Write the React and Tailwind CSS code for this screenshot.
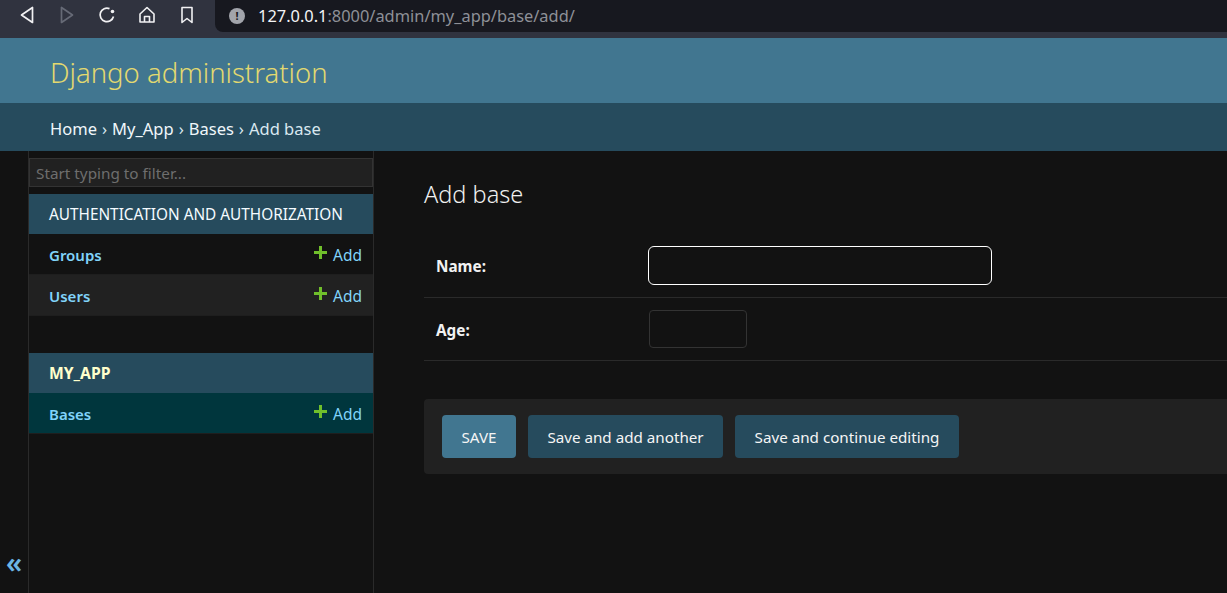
import React from 'react';

const font = { fontFamily: '"Noto Sans", "Open Sans", sans-serif' };

const NavRow = ({ name, className = 'bg-[#121212]' }) => (
  <div className={`flex h-[41px] items-center justify-between border-b border-[#1e1e1e] pl-5 pr-[11px] pt-[2px] text-[15px] ${className}`}>
    <span className="font-semibold text-[#81d4fa]">{name}</span>
    <span className="flex items-center text-[15.5px] text-[#81d4fa]">
      <svg width="13" height="13" viewBox="0 0 13 13" className="mr-[6px] mb-[6px]">
        <path d="M5 0h3v5h5v3H8v5H5V8H0V5h5z" fill="#70bf2b" />
      </svg>
      <span className="pt-[2px]">Add</span>
    </span>
  </div>
);

const Caption = ({ children, className = 'text-[15.35px] font-normal text-[#f5fbff]' }) => (
  <div className={`flex h-10 items-center bg-[#264b5d] pl-5 pt-[2px] ${className}`}>{children}</div>
);

const FormRow = ({ label, height, children }) => (
  <div className={`flex items-center border-b border-[#2a2a2a] pl-3 ${height}`}>
    <label className="w-[212px] pt-[2px] text-[15.3px] font-bold text-[#f2f2f2]">{label}</label>
    {children}
  </div>
);

const Button = ({ children, className }) => (
  <button className={`flex h-[43px] items-center justify-center rounded pt-px text-[15.2px] text-[#f5f5f5] ${className}`}>{children}</button>
);

export default function App() {
  return (
    <div style={font} className="flex h-[593px] w-[1227px] flex-col overflow-hidden bg-[#121212]">
      <div className="flex h-[38px] shrink-0 bg-[#30333f]">
        <div className="flex w-[215px] shrink-0 items-center gap-5 pb-[8px] pl-[17px] text-[#f1f1f3]">
          <svg width="20" height="20" viewBox="0 0 20 20" fill="none" stroke="currentColor" strokeWidth="1.7" strokeLinejoin="round">
            <path d="M15.5 2.5v15L4.5 10z" />
          </svg>
          <svg width="20" height="20" viewBox="0 0 20 20" fill="none" stroke="#666a76" strokeWidth="1.7" strokeLinejoin="round">
            <path d="M4.5 2.5v15l11-7.5z" />
          </svg>
          <svg width="20" height="20" viewBox="0 0 20 20" fill="none" stroke="currentColor" strokeWidth="1.7">
            <path d="M16.5 11.5A6.8 6.8 0 1 1 12.5 3.6" />
            <circle cx="15.5" cy="6.5" r="1.8" fill="currentColor" stroke="none" />
          </svg>
          <svg width="20" height="20" viewBox="0 0 20 20" fill="none" stroke="currentColor" strokeWidth="1.6" strokeLinejoin="round">
            <path d="M3 9l7-6.5L17 9v8H3z" />
            <path d="M7.5 17v-5.5h5V17" />
          </svg>
          <svg width="20" height="20" viewBox="0 0 20 20" fill="none" stroke="currentColor" strokeWidth="1.6" strokeLinejoin="round">
            <path d="M5 2.5h10v15l-5-4-5 4z" />
          </svg>
        </div>
        <div className="flex h-8 flex-1 items-center rounded-bl-lg bg-[#17181f] pl-[14px]">
          <span className="flex h-4 w-4 items-center justify-center rounded-full bg-[#a2a4ab] text-[11px] font-bold text-[#17181f]">!</span>
          <span className="ml-[13px] text-[16.4px] text-[#f4f4f6]">
            127.0.0.1<span className="text-[#8e9097]">:8000/admin/my_app/base/add/</span>
          </span>
        </div>
      </div>

      <header className="flex h-[65px] shrink-0 items-center bg-[#417690] pl-[50px] pt-[4px] text-[27.5px] font-light text-[#e3d96f]">
        Django administration
      </header>
      <nav className="flex h-[48px] shrink-0 items-center bg-[#264b5d] pl-[50px] pt-[5px] text-[16.5px] text-[#d9e8f0]">
        <span className="text-[#f0f7fb]">Home</span>
        <span className="mx-[5px]">›</span>
        <span className="text-[#f0f7fb]">My_App</span>
        <span className="mx-[5px]">›</span>
        <span className="text-[#f0f7fb]">Bases</span>
        <span className="mx-[5px]">›</span>
        <span>Add base</span>
      </nav>

      <div className="flex min-h-0 flex-1">
        <div className="flex w-[29px] shrink-0 items-end justify-center border-r border-[#2a2a2a] pb-[17px]">
          <span className="text-[28px] leading-none font-semibold text-[#6cb6e4]">«</span>
        </div>
        <aside className="w-[345px] shrink-0 border-r border-[#2a2a2a] pt-[7px]">
          <input
            placeholder="Start typing to filter..."
            className="mb-[7px] block h-[29px] w-full border border-[#333] bg-[#212121] px-[6px] text-[15.3px] text-white outline-none placeholder:text-[#6e6e6e]"
          />
          <Caption>AUTHENTICATION AND AUTHORIZATION</Caption>
          <NavRow name="Groups" />
          <NavRow name="Users" className="bg-[#212121]" />
          <div className="h-[37px]" />
          <Caption className="text-[15.7px] font-bold text-[#ffffcc]">MY_APP</Caption>
          <NavRow name="Bases" className="bg-[#00363d]" />
        </aside>
        <main className="min-w-0 flex-1 pl-[50px] pt-[24px]">
          <h1 className="text-[23.5px] leading-[38px] font-light text-[#f0f0f0]">Add base</h1>
          <div className="mt-5">
            <FormRow label="Name:" height="h-[65px]">
              <input className="h-[39px] w-[344px] rounded-md border border-white bg-[#121212] outline-none" />
            </FormRow>
            <FormRow label="Age:" height="h-[63px]">
              <input className="ml-px h-[38px] w-[98px] rounded border border-[#333] bg-[#121212] outline-none" />
            </FormRow>
          </div>
          <div className="mt-[38px] flex h-[75px] items-center gap-3 rounded-l bg-[#212121] pl-[18px]">
            <Button className="w-[74px] bg-[#417690]">SAVE</Button>
            <Button className="w-[195px] bg-[#264b5d]">Save and add another</Button>
            <Button className="w-[224px] bg-[#264b5d]">Save and continue editing</Button>
          </div>
        </main>
      </div>
    </div>
  );
}
